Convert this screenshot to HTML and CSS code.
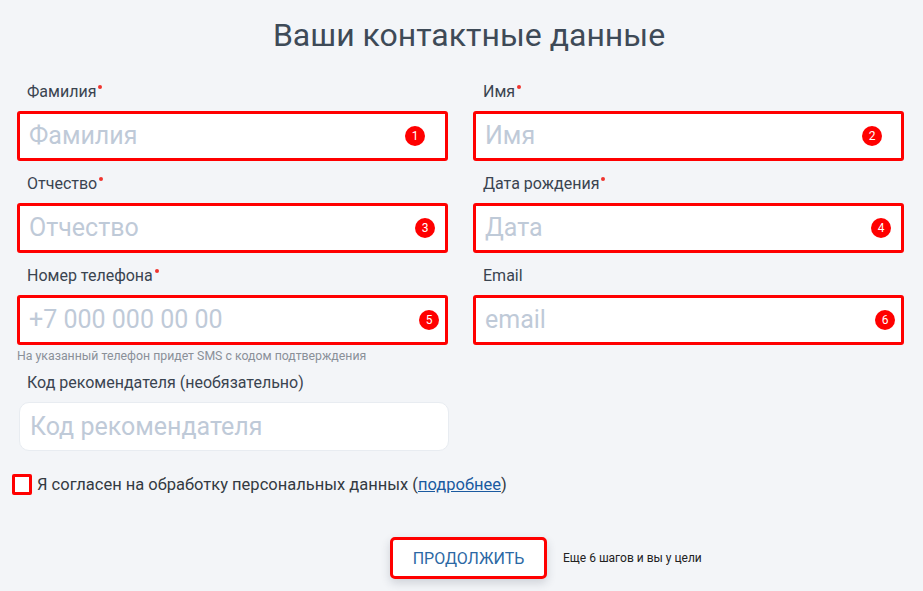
FILE: index.html
```html
<!DOCTYPE html>
<html lang="ru">
<head>
<meta charset="utf-8">
<title>Ваши контактные данные</title>
<link rel="stylesheet" href="styles.css">
</head>
<body>
<main class="page">
  <h1 class="title">Ваши контактные данные</h1>
  <form class="form">
    <div class="grid">
      <div class="field">
        <label class="label">Фамилия<span class="req"></span></label>
        <div class="input marked"><span class="ph">Фамилия</span><span class="badge b1">1</span></div>
      </div>
      <div class="field">
        <label class="label">Имя<span class="req"></span></label>
        <div class="input marked"><span class="ph">Имя</span><span class="badge b2">2</span></div>
      </div>
      <div class="field">
        <label class="label">Отчество<span class="req"></span></label>
        <div class="input marked"><span class="ph">Отчество</span><span class="badge b3">3</span></div>
      </div>
      <div class="field">
        <label class="label">Дата рождения<span class="req"></span></label>
        <div class="input marked"><span class="ph">Дата</span><span class="badge b4">4</span></div>
      </div>
      <div class="field">
        <label class="label">Номер телефона<span class="req"></span></label>
        <div class="input marked"><span class="ph">+7 000 000 00 00</span><span class="badge b5">5</span></div>
        <p class="hint">На указанный телефон придет SMS с кодом подтверждения</p>
      </div>
      <div class="field">
        <label class="label">Email</label>
        <div class="input marked"><span class="ph">email</span><span class="badge b6">6</span></div>
      </div>
      <div class="field">
        <label class="label">Код рекомендателя (необязательно)</label>
        <div class="input plain"><span class="ph">Код рекомендателя</span></div>
      </div>
    </div>
    <div class="consent">
      <span class="checkbox"></span>
      <span class="consent-text">Я согласен на обработку персональных данных (<a href="#" class="link">подробнее</a>)</span>
    </div>
    <div class="actions">
      <button type="button" class="btn">ПРОДОЛЖИТЬ</button>
      <span class="steps">Еще 6 шагов и вы у цели</span>
    </div>
  </form>
</main>
</body>
</html>
```

FILE: styles.css
```css
* { box-sizing: border-box; }
html, body { margin: 0; padding: 0; }
body {
  background: #f3f5f8;
  font-family: Roboto, "Noto Sans", sans-serif;
  color: #3a4450;
  width: 923px;
  height: 591px;
  overflow: hidden;
}
.page { padding: 0; }
.title {
  margin: 15px 0 0;
  height: 40px;
  line-height: 40px;
  font-size: 32px;
  font-weight: 400;
  text-align: center;
  color: #3e4a57;
  padding-left: 15px;
}
.form { margin-top: 27px; }
.grid {
  display: grid;
  grid-template-columns: 431px 431px;
  column-gap: 25px;
  row-gap: 13px;
  padding-left: 17px;
}
.field { display: flex; flex-direction: column; }
.label {
  font-size: 16px;
  line-height: 20px;
  height: 20px;
  padding-left: 10px;
  margin-bottom: 9px;
  color: #3a4450;
}
.req {
  display: inline-block;
  width: 4px;
  height: 4px;
  border-radius: 50%;
  background: #f0342f;
  vertical-align: top;
  margin: 3px 0 0 2px;
}
.input {
  position: relative;
  height: 50px;
  background: #fff;
  display: flex;
  align-items: center;
}
.input.marked {
  border: 3px solid #ff0000;
  border-radius: 3px;
  padding-left: 9px;
}
.input.plain {
  margin-left: 2px;
  width: 430px;
  height: 49px;
  border: 1px solid #e8ecf1;
  border-radius: 10px;
  padding-left: 10px;
}
.ph {
  font-size: 25px;
  color: #bfcad8;
  line-height: 30px;
}
.badge {
  position: absolute;
  top: 50%;
  margin-top: -10px;
  width: 20px;
  height: 20px;
  border-radius: 50%;
  background: #f00;
  color: #fff;
  font-size: 12px;
  line-height: 20px;
  text-align: center;
}
.b1 { right: 20px; }
.b2 { right: 19px; }
.b3 { right: 10px; }
.b4 { right: 10px; }
.b5 { right: 6px; }
.b6 { right: 6px; }
.hint {
  margin: 4px 0 -3px;
  font-size: 12.3px;
  line-height: 14px;
  color: #8a9098;
}
.consent {
  display: flex;
  align-items: center;
  padding-left: 12px;
  margin-top: 22px;
  height: 22px;
}
.checkbox {
  width: 20px;
  height: 21px;
  border: 3px solid #ff0000;
  border-radius: 2px;
  background: #fff;
  margin-right: 5px;
}
.consent-text {
  font-size: 16.5px;
  color: #333a42;
}
.link { color: #1a5aa0; text-decoration: underline; }
.actions {
  display: grid;
  grid-template-columns: 1fr auto 1fr;
  align-items: center;
  margin-top: 42px;
  padding-left: 14px;
}
.btn {
  grid-column: 2;
  width: 157px;
  height: 42px;
  border: 3px solid #ff0000;
  border-radius: 5px;
  background: #fff;
  box-shadow: 0 4px 10px rgba(40, 50, 70, 0.18);
  font-family: Roboto, "Noto Sans", sans-serif;
  font-size: 16px;
  color: #2b68a4;
  padding: 0;
}
.steps {
  grid-column: 3;
  margin-left: 16px;
  font-size: 12px;
  color: #222;
}
```
